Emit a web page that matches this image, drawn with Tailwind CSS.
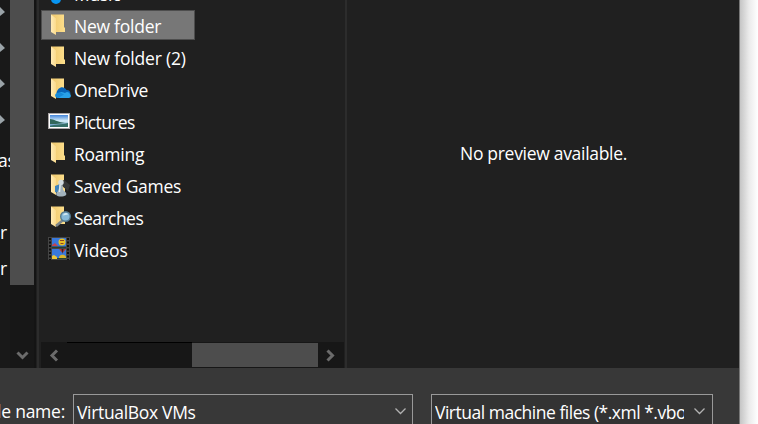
<!DOCTYPE html>
<html lang="en">
<head>
<meta charset="utf-8">
<title>Open file</title>
<script src="https://cdn.jsdelivr.net/npm/@tailwindcss/browser@4"></script>
</head>
<body class="w-[758px] h-[424px] overflow-hidden bg-white text-white text-[17.5px] leading-8 tracking-[-0.25px] font-['Open_Sans','Noto_Sans',sans-serif]">
<svg class="absolute w-0 h-0">
  <defs>
    <linearGradient id="front" x1="0" x2="1"><stop offset="0" stop-color="#efc76c"/><stop offset="1" stop-color="#fddf8c"/></linearGradient>
    <linearGradient id="flap" x1="0" x2="1"><stop offset="0" stop-color="#ffebb6"/><stop offset="1" stop-color="#fbdb8c"/></linearGradient>
    <linearGradient id="sky" x1="0" x2="0" y1="0" y2="1"><stop offset="0" stop-color="#4486dc"/><stop offset=".5" stop-color="#d8f0fa"/><stop offset="1" stop-color="#3676a8"/></linearGradient>
    <symbol id="folder" viewBox="0 0 24 24"><path d="M3 1.500h13V14l1 1v4H3z" fill="url(#front)"/><path d="M3 1.500l5 4V22l-5-3z" fill="url(#flap)"/></symbol>
  </defs>
</svg>
<div class="flex h-full">
  <div class="w-[739px] h-full flex flex-col bg-[#383838] overflow-hidden">
    <div class="flex h-[368px] shrink-0 bg-[#202020]">
      <!-- navigation tree -->
      <div class="w-[10px] h-full bg-[#191919] overflow-hidden shrink-0 flex flex-col">
        <div class="h-[142px] shrink-0">
          <svg class="w-[10px] h-[142px]" viewBox="0 0 10 142" fill="#9aa3a8"><path d="M0 7l5 5-5 4zM0 43l5 5-5 4zM0 79l5 5-5 4zM0 115l5 5-5 4z"/></svg>
        </div>
        <div class="h-9 leading-9 whitespace-nowrap -ml-[2px]">as</div>
        <div class="h-9"></div>
        <div class="h-9 leading-9">r</div>
        <div class="h-9 leading-9">r</div>
      </div>
      <div class="w-[24px] h-full bg-[#171717] flex flex-col shrink-0">
        <div class="h-[285px] bg-[#4d4d4d]"></div>
        <svg class="w-6 h-[83px]" viewBox="0 0 24 83" fill="none" stroke="#6b6b6b" stroke-width="3"><path d="M7.500 67.500l5 5 5-5"/></svg>
      </div>
      <div class="w-[2px] bg-[#141414] shrink-0"></div>
      <div class="w-[1px] bg-[#202020] shrink-0"></div>
      <div class="w-[2px] bg-[#2c2c2c] shrink-0"></div>
      <!-- file list -->
      <div class="w-[306px] h-full pl-[2px] flex flex-col overflow-hidden shrink-0">
        <ul class="h-[342px] -mt-[22px] mb-[22px] shrink-0 whitespace-nowrap">
          <li class="h-8 pl-[7px] flex gap-[2px]"><svg class="w-6 h-6 mt-1" viewBox="0 0 24 24"><circle cx="8" cy="17" r="5" fill="#0795f2"/><path d="M11 4v13" stroke="#0795f2" stroke-width="3"/></svg><span>Music</span></li>
          <li class="h-[30px] mb-[2px] w-[154px] pl-[6px] flex gap-[2px] bg-[#777777] border border-[#4d4d4d] leading-[30px]"><svg class="w-6 h-6 mt-[2px]"><use href="#folder"/></svg><span>New folder</span></li>
          <li class="h-8 pl-[7px] flex gap-[2px]"><svg class="w-6 h-6 mt-[3px]"><use href="#folder"/></svg><span class="tracking-[-0.2px]">New folder (2)</span></li>
          <li class="h-8 pl-[7px] flex gap-[2px]"><svg class="w-6 h-6 mt-[3px]" viewBox="0 0 24 24"><use href="#folder"/><path d="M8.500 16c1-6 7-8 10-3 3 0 4 2 4 4l-10 3z" fill="#0864b8"/><path d="M11 21c-5 0-5-5 0-5 3-2 5 0 6 0 2-2 4-1 5 1 1.500 1 1 4-1 4z" fill="#28a1e8"/><path d="M8 16.500c3-2 5-1 8 1l-6 3.500c-3-.5-3-3-2-4.500z" fill="#168ad8"/></svg><span class="tracking-[-0.37px]">OneDrive</span></li>
          <li class="h-8 pl-[7px] flex gap-[2px]"><svg class="w-6 h-6 mt-[3px]" viewBox="0 0 24 24"><path d="M0 4h22v16H0z" fill="#aaa5a6"/><path d="M1 5h20v14H1z" fill="#fff"/><path d="M2 6h18v12H2z" fill="url(#sky)"/><path d="M2 10c4 0 7 3 15 4l-9 1H2z" fill="#32675b"/><path d="M2 18v-1c5-2 11-1 18-3v4z" fill="#356f68"/></svg><span class="tracking-[-0.6px]">Pictures</span></li>
          <li class="h-8 pl-[7px] flex gap-[2px]"><svg class="w-6 h-6 mt-[3px]"><use href="#folder"/></svg><span>Roaming</span></li>
          <li class="h-8 pl-[7px] flex gap-[2px]"><svg class="w-6 h-6 mt-[3px]" viewBox="0 0 24 24"><use href="#folder"/><path d="M14 8l2-1 6 5-2 6-6-5z" fill="#343638"/><path d="M7 13l5-2-2 9-3-1z" fill="#3e83bc"/><circle cx="13" cy="9.500" r="2.700" fill="#d2dce1"/><path d="M11.500 12h3l.7 5 3 3v2c-3 2-8 2-10 0v-2l3-3z" fill="#a2b2bc"/><path d="M12 12l-.5 7" stroke="#e2eaed" stroke-width="1.500"/></svg><span>Saved Games</span></li>
          <li class="h-8 pl-[7px] flex gap-[2px]"><svg class="w-6 h-6 mt-[3px]" viewBox="0 0 24 24"><use href="#folder"/><path d="M14.500 15.500l-6.500 5.500" stroke="#7d868a" stroke-width="2.500"/><circle cx="17.500" cy="11.500" r="4.800" fill="#86b9d8" stroke="#53798e" stroke-width="1.400"/><path d="M15 10.500c1-3 4-3 5-1z" fill="#d3e9f2"/></svg><span class="tracking-[-0.55px]">Searches</span></li>
          <li class="h-8 pl-[7px] flex gap-[2px]"><svg class="w-6 h-6 mt-[3px]" viewBox="0 0 24 24"><path d="M0 0h22v23H0z" fill="#444"/><path d="M4 1h14v10H4zM4 12h14v10H4z" fill="#3979dc"/><path d="M2 1v22M20 1v22" stroke="#101010" stroke-width="2" stroke-dasharray="2 1.500"/><path d="M4 8l3-2 3 3H4z" fill="#c2454f"/><ellipse cx="14" cy="5" rx="3.500" ry="3.500" fill="#e8bf22"/><path d="M12 3.500h4M12.500 6.500h3" stroke="#8c4526" stroke-width="1.200"/><path d="M4 9.500h14V11H4z" fill="#293d2d"/><path d="M11 12h7l-3 3.500h-1z" fill="#bf342c"/><path d="M13.500 12h2l-1 5z" fill="#30242a"/><path d="M4 19l2-1 3 2v2H4z" fill="#eec83c"/><path d="M11 20c1-3 6-3 7 0v2h-7z" fill="#dcb52b"/><path d="M9 21h9v1H9z" fill="#274531"/></svg><span class="tracking-[-0.1px]">Videos</span></li>
        </ul>
        <div class="w-[303px] h-[26px] bg-[#171717] flex shrink-0">
          <svg class="w-[26px] h-[26px]" viewBox="0 0 26 26" fill="none" stroke="#6b6b6b" stroke-width="3"><path d="M16 8.500l-5 5 5 5"/></svg>
          <div class="w-[125px] border-t border-black"></div>
          <div class="w-[126px] h-6 mt-px bg-[#4d4d4d]"></div>
          <svg class="w-[26px] h-[26px]" viewBox="0 0 26 26" fill="none" stroke="#6b6b6b" stroke-width="3"><path d="M9.500 8.500l5 5-5 5"/></svg>
        </div>
      </div>
      <div class="w-[2px] bg-[#2c2c2c] shrink-0"></div>
      <!-- preview pane -->
      <div class="flex-1 pt-[137px] pl-[113px] whitespace-nowrap tracking-[-0.3px]">No preview available.</div>
    </div>
    <div class="flex pt-[26px] h-[56px] whitespace-nowrap">
      <div class="w-[73px] flex justify-end pr-[8px] pt-[1px] shrink-0 overflow-hidden">File name:</div>
      <div class="w-[340px] h-9 border border-[#999] shrink-0 flex justify-between pl-[3px]"><span class="tracking-[-0.33px] pt-px">VirtualBox VMs</span><svg class="w-6 h-8" viewBox="0 0 24 32" fill="none" stroke="#b2b2b2" stroke-width="1.300"><path d="M7.500 13.500l5 5 5-5"/></svg></div>
      <div class="w-[282px] h-9 ml-[18px] border border-[#999] bg-[#333] shrink-0 flex justify-between pl-[3px]"><span class="w-[249px] overflow-hidden pt-px tracking-[-0.49px]">Virtual machine files (*.xml *.vbox)</span><svg class="w-6 h-8" viewBox="0 0 24 32" fill="none" stroke="#b2b2b2" stroke-width="1.300"><path d="M6.500 13.500l5 5 5-5"/></svg></div>
    </div>
  </div>
  <div class="w-px bg-[#777]"></div>
  <div class="flex-1 bg-linear-to-r from-[#c5c5c5] via-[#ebebeb] to-white"></div>
</div>
</body>
</html>
